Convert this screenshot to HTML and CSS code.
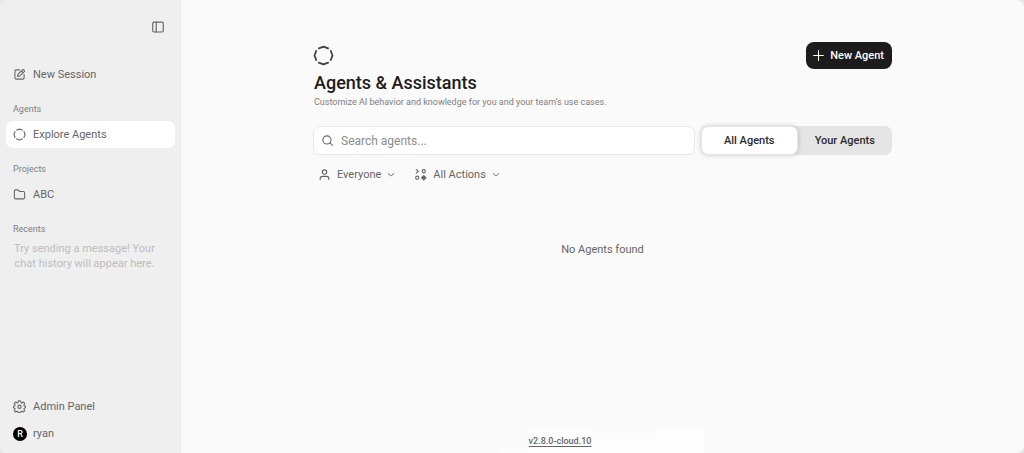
FILE: index.html
```html
<!DOCTYPE html>
<html lang="en">
<head>
    <meta charset="UTF-8">
    <meta name="viewport" content="width=device-width, initial-scale=1.0">
    <title>Agents & Assistants</title>
    <link rel="stylesheet" href="styles.css">
</head>
<body>

<!-- shared icons -->
<svg class="sprite" width="0" height="0" aria-hidden="true">
    <symbol id="ring" viewBox="0 0 24 24">
        <path d="M6 4.200 12 1.800l6 2.400M20 6l2.300 6-2.300 6M18 19.800l-6 2.400-6-2.400M4 18l-2.300-6L4 6"/>
    </symbol>
    <symbol id="chevron" viewBox="0 0 24 24">
        <path d="m4 8 6 5.500q2 1.500 4 0L20 8"/>
    </symbol>
</svg>

<div class="app">
    <aside class="sidebar">
        <button class="toggle" aria-label="Toggle sidebar">
            <svg class="icon" viewBox="0 0 24 24"><rect x="3" y="3.5" width="18" height="17" rx="2"/><path d="M9 3.5v17"/></svg>
        </button>

        <nav class="nav">
            <a class="item" href="#">
                <svg class="icon" viewBox="0 0 24 24"><path d="M12 3.500H6A2.500 2.500 0 0 0 3.500 6v12A2.500 2.500 0 0 0 6 20.500h12a2.500 2.500 0 0 0 2.500-2.500v-6"/><path d="m8.500 15.500.8-4 8.200-8.200q1.200-1 2.400 0l.9.900q1 1.200 0 2.400l-8.300 8.100zM15.500 5.500l3 3"/></svg>
                New Session
            </a>
            <h2 class="label">Agents</h2>
            <a class="item active" href="#">
                <svg class="icon ring"><use href="#ring"/></svg>
                Explore Agents
            </a>
            <h2 class="label">Projects</h2>
            <a class="item" href="#">
                <svg class="icon" viewBox="0 0 24 24"><path d="M2.500 17V6A2.500 2.500 0 0 1 5 3.500h4l3.500 3H19A2.500 2.500 0 0 1 21.500 9v8.500A2.500 2.500 0 0 1 19 20H5.500a3 3 0 0 1-3-3z"/></svg>
                ABC
            </a>
            <h2 class="label">Recents</h2>
            <p class="empty-history">Try sending a message! Your chat history will appear here.</p>
        </nav>

        <div class="account">
            <a class="item" href="#">
                <svg class="icon" viewBox="0 0 24 24"><path d="M10 1.500h4l.8 3.300 1.400.6 3-1.600 2.500 2.500-1.600 3 .6 1.400 2.300.8v3l-2.300.8-.6 1.400 1.600 3-2.500 2.500-3-1.600-1.400.6-.8 2.300h-4l-.8-2.300-1.400-.6-3 1.600-2.500-2.500 1.600-3-.6-1.400L1 14.500v-3l2.300-.8.6-1.400-1.600-3 2.500-2.500 3 1.600 1.400-.6z"/><circle cx="12" cy="12.500" r="3"/></svg>
                Admin Panel
            </a>
            <button class="item">
                <span class="avatar">R</span>
                ryan
            </button>
        </div>
    </aside>

    <main class="main">
        <div class="content">
            <header class="header">
                <div>
                    <svg class="logo ring"><use href="#ring"/></svg>
                    <h1 class="title">Agents &amp; Assistants</h1>
                    <p class="subtitle">Customize AI behavior and knowledge for you and your team’s use cases.</p>
                </div>
                <button class="btn-new">
                    <svg class="icon" viewBox="0 0 24 24"><path d="M12 3v18M3 12h18"/></svg>
                    New Agent
                </button>
            </header>

            <div class="toolbar">
                <label class="search">
                    <svg class="icon" viewBox="0 0 24 24"><circle cx="11" cy="11" r="7.500"/><path d="m16.500 16.500 4.500 4.500"/></svg>
                    <input type="text" placeholder="Search agents..." aria-label="Search agents">
                </label>
                <div class="tabs">
                    <button class="tab active">All Agents</button>
                    <button class="tab">Your Agents</button>
                </div>
            </div>

            <div class="filters">
                <button class="filter">
                    <svg class="icon" viewBox="0 0 24 24"><circle cx="12" cy="7.500" r="4"/><path d="M4 21v-1.500q0-4 4-4h8q4 0 4 4V21"/></svg>
                    Everyone
                    <svg class="chevron"><use href="#chevron"/></svg>
                </button>
                <button class="filter">
                    <svg class="icon" viewBox="0 0 24 24"><path d="m4 2.500 4 3.500-4 3.500"/><circle cx="18" cy="6" r="3"/><circle cx="6" cy="18" r="3"/><path d="m18 14 4 4-4 4-4-4zM18 14v8M14 18h8"/></svg>
                    All Actions
                    <svg class="chevron"><use href="#chevron"/></svg>
                </button>
            </div>

            <p class="no-agents">No Agents found</p>
        </div>

        <footer class="footer">
            <span class="patch patch-low"></span>
            <a class="version" href="#">v2.8.0-cloud.10</a>
            <span class="patch patch-mid"></span>
            <span class="patch patch-high"></span>
        </footer>
    </main>
</div>

</body>
</html>
```
FILE: styles.css
```css
* {
    box-sizing: border-box;
}
body {
    margin: 0;
    background-color: #e6e6e6;
    color: #666;
    font-family: Roboto, "Liberation Sans", sans-serif;
    font-size: 11px;
    font-weight: 400;
}
h1, h2, p {
    margin: 0;
}
button, input {
    font: inherit;
    color: inherit;
    border: none;
    background: none;
    padding: 0;
}
button {
    cursor: pointer;
}
a {
    color: inherit;
    text-decoration: none;
}
svg {
    fill: none;
    stroke: currentColor;
    stroke-width: 2;
    stroke-linecap: round;
    stroke-linejoin: round;
    flex-shrink: 0;
}
.sprite {
    display: block;
}
.icon {
    width: 13px;
    height: 13px;
}
.ring {
    stroke-linecap: butt;
}
.app {
    display: flex;
    min-height: 100vh;
    border-radius: 8px;
    overflow: hidden;
    background-color: #fafafa;
}

/* Sidebar */
.sidebar {
    width: 181px;
    flex-shrink: 0;
    display: flex;
    flex-direction: column;
    padding: 20px 6px 6px;
    background-color: #efefef;
}
.toggle {
    align-self: flex-end;
    display: flex;
    margin-right: 10px;
}
.toggle .icon {
    width: 14px;
    height: 14px;
}
.nav {
    margin-top: 27px;
}
.item {
    display: flex;
    align-items: center;
    gap: 7px;
    width: 100%;
    height: 27px;
    padding: 0 7px;
    border-radius: 7px;
}
.item.active {
    background-color: #fff;
}
.label {
    margin: 15px 7px 6px;
    font-size: 9px;
    font-weight: 400;
    line-height: 12px;
    color: #808080;
}
.empty-history {
    padding: 0 12px 0 0;
    line-height: 15px;
    text-align: center;
    color: #bdbdbd;
}
.account {
    margin-top: auto;
}
.avatar {
    width: 14px;
    height: 14px;
    margin-right: -1px;
    border-radius: 50%;
    background-color: #000;
    color: #fff;
    font-size: 9px;
    font-weight: 500;
    line-height: 14px;
    text-align: center;
}

/* Main */
.main {
    flex: 1;
    display: flex;
    flex-direction: column;
    padding: 42px 16px 0;
}
.content {
    width: 100%;
    max-width: 579px;
    margin: 0 auto;
}
.header {
    display: flex;
    justify-content: space-between;
    align-items: flex-start;
}
.logo {
    display: block;
    width: 21px;
    height: 21px;
    margin-top: 3px;
    color: #404040;
}
.title {
    padding-left: 1px;
    margin-top: 5px;
    font-size: 18px;
    font-weight: 500;
    line-height: 24px;
    color: #1c1c1c;
}
.subtitle {
    padding-left: 1px;
    font-size: 9px;
    line-height: 14px;
    color: #808080;
}
.btn-new {
    display: flex;
    align-items: center;
    gap: 5px;
    height: 27px;
    padding: 0 8px 0 6px;
    border-radius: 8px;
    background-color: #1c1c1c;
    color: #fff;
    font-weight: 500;
}
.toolbar {
    display: grid;
    grid-template-columns: 2fr 1fr;
    gap: 6px;
    margin-top: 17px;
}
.search {
    display: flex;
    align-items: center;
    gap: 7px;
    height: 29px;
    padding: 0 7px;
    border: 1px solid #e8e8e8;
    border-radius: 7px;
    background-color: #fff;
}
.search input {
    flex: 1;
    min-width: 0;
    font-size: 12px;
    outline: none;
}
.search input::placeholder {
    color: #8c8c8c;
}
.tabs {
    display: flex;
    border-radius: 7px;
    background-color: #e5e5e6;
}
.tab {
    flex: 1;
    border-radius: 7px;
    color: #2b2b2b;
    font-weight: 500;
}
.tab.active {
    border: 1px solid #e5e5e6;
    background-color: #fff;
    box-shadow: 0 0 5px rgba(0, 0, 0, 0.2);
}
.filters {
    display: flex;
    gap: 19px;
    margin-top: 12px;
    padding-left: 5px;
}
.filter {
    display: flex;
    align-items: center;
    gap: 6px;
    height: 15px;
}
.chevron {
    width: 8px;
    height: 8px;
    stroke-width: 3;
}
.no-agents {
    margin-top: 60px;
    line-height: 16px;
    text-align: center;
}

/* Footer */
.footer {
    display: flex;
    justify-content: center;
    align-items: flex-end;
    margin-top: auto;
}
.version {
    height: 25px;
    padding: 6px 2px 0 1px;
    background-color: #fdfdfd;
    font-size: 9px;
    font-weight: 500;
    line-height: 14px;
    text-decoration: underline;
    text-underline-offset: 2px;
}
.patch {
    background-color: #fdfdfd;
}
.patch-low {
    width: 27px;
    height: 4px;
}
.patch-mid {
    width: 62px;
    height: 20px;
}
.patch-high {
    width: 49px;
    height: 24px;
}
```
